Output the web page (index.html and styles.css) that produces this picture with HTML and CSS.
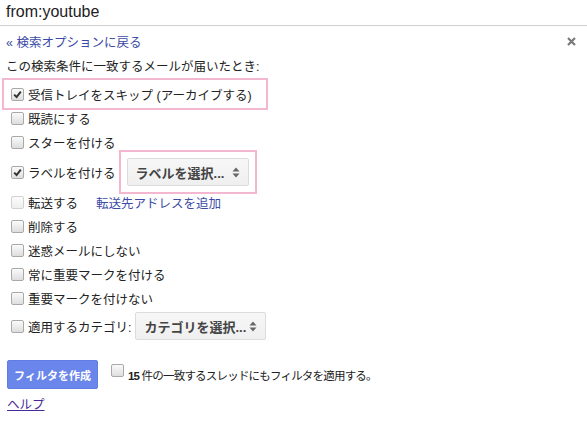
FILE: index.html
```html
<!DOCTYPE html>
<html lang="ja">
<head>
    <meta charset="UTF-8">
    <title>フィルタを作成</title>
    <link rel="stylesheet" href="styles.css">
</head>
<body>
    <div class="search-bar">from:youtube</div>

    <div class="panel">
        <div class="panel-top">
            <a class="link back-link" href="#">« 検索オプションに戻る</a>
            <span class="close">
                <svg width="9" height="9" viewBox="0 0 9 9"><path d="M1 1L8 8M8 1L1 8" stroke="#7a7a7a" stroke-width="2.2"/></svg>
            </span>
        </div>

        <div class="intro">この検索条件に一致するメールが届いたとき:</div>

        <div class="row hl">
            <span class="cb on"><svg width="9" height="9" viewBox="0 0 9 9"><path d="M1.2 4.6L3.6 7L7.8 1.6" fill="none" stroke="#333" stroke-width="2"/></svg></span>
            受信トレイをスキップ (アーカイブする)
        </div>
        <div class="row"><span class="cb"></span>既読にする</div>
        <div class="row"><span class="cb"></span>スターを付ける</div>
        <div class="row tall">
            <span class="cb on"><svg width="9" height="9" viewBox="0 0 9 9"><path d="M1.2 4.6L3.6 7L7.8 1.6" fill="none" stroke="#333" stroke-width="2"/></svg></span>
            ラベルを付ける
            <div class="hl-select">
                <span class="select select-label">ラベルを選択...
                    <svg width="8" height="11" viewBox="0 0 8 11"><path d="M4 0.5L7.5 4.5H0.5Z M4 10.5L7.5 6.5H0.5Z" fill="#666"/></svg>
                </span>
            </div>
        </div>
        <div class="row"><span class="cb off"></span>転送する<a class="link forward-link" href="#">転送先アドレスを追加</a></div>
        <div class="row"><span class="cb"></span>削除する</div>
        <div class="row"><span class="cb"></span>迷惑メールにしない</div>
        <div class="row"><span class="cb"></span>常に重要マークを付ける</div>
        <div class="row"><span class="cb"></span>重要マークを付けない</div>
        <div class="row cat">
            <span class="cb"></span>適用するカテゴリ:
            <span class="select select-cat">カテゴリを選択...
                <svg width="8" height="11" viewBox="0 0 8 11"><path d="M4 0.5L7.5 4.5H0.5Z M4 10.5L7.5 6.5H0.5Z" fill="#666"/></svg>
            </span>
        </div>

        <div class="actions">
            <button class="btn-create">フィルタを作成</button>
            <span class="cb"></span>
            <span class="apply-text"><b>15</b> 件の一致するスレッドにもフィルタを適用する。</span>
        </div>

        <a class="help" href="#">ヘルプ</a>
    </div>
</body>
</html>
```

FILE: styles.css
```css
body {
    margin: 0;
    font-family: 'Liberation Sans', 'Noto Sans CJK JP', sans-serif;
    font-size: 12.5px;
    color: #222;
    background: #fff;
}

.search-bar {
    height: 25px;
    line-height: 23px;
    padding-left: 6px;
    font-size: 16px;
    border-bottom: 1px solid #cfcfcf;
}

.panel {
    padding: 0 6px;
}

.panel-top {
    display: flex;
    justify-content: space-between;
    align-items: center;
    height: 20px;
    margin-top: 5px;
}

.close {
    display: flex;
    margin-right: 5px;
}

.link {
    color: #3b4aa6;
    text-decoration: none;
}

.intro {
    height: 20px;
    line-height: 20px;
    margin-top: 6px;
}

.row {
    display: flex;
    align-items: center;
    height: 24px;
    padding-left: 5px;
    white-space: nowrap;
}

.row.hl {
    box-sizing: border-box;
    width: 266px;
    height: 32px;
    margin: 1px 0 -4px -4px;
    padding-left: 7px;
    border: 2px solid #f4b7d0;
}

.row.tall {
    height: 36px;
}

.row.cat {
    height: 32px;
}

.cb {
    box-sizing: border-box;
    display: inline-flex;
    align-items: center;
    justify-content: center;
    width: 13px;
    height: 13px;
    margin-right: 4px;
    border: 1px solid #a9a9a9;
    border-radius: 2px;
    background: linear-gradient(#fafafa, #dedede);
    flex-shrink: 0;
}

.cb.off {
    border-color: #d2d2d2;
    background: linear-gradient(#fcfcfc, #eeeeee);
}

.forward-link {
    margin-left: 18px;
}

.hl-select {
    display: flex;
    margin-left: 3px;
    padding: 6px 6px;
    border: 2px solid #f4b7d0;
}

.select {
    box-sizing: border-box;
    display: inline-flex;
    align-items: center;
    justify-content: space-between;
    height: 28px;
    padding: 0 8px 0 8px;
    border: 1px solid #dcdcdc;
    border-radius: 2px;
    background: linear-gradient(#f7f7f7, #efefef);
    color: #444;
    font-size: 13px;
    font-weight: bold;
}

.select-label {
    width: 122px;
}

.select-cat {
    width: 131px;
    margin-left: 4px;
}

.actions {
    display: flex;
    align-items: center;
    margin-top: 18px;
}

.btn-create {
    width: 91px;
    height: 29px;
    margin: 0 13px 0 1px;
    border: 1px solid #5f7de3;
    border-radius: 2px;
    background: #6a86ea;
    color: #fff;
    font-family: inherit;
    font-size: 11px;
    font-weight: bold;
}

.actions .cb {
    margin-top: -9px;
}

.apply-text {
    font-size: 11.5px;
    letter-spacing: -0.8px;
}

.help {
    display: inline-block;
    margin: 5px 0 0 1px;
    color: #4a2a96;
}
```
